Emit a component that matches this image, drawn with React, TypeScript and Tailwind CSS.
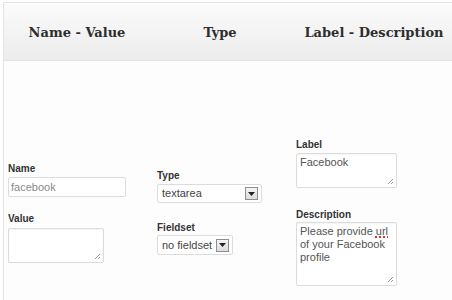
const serif = { fontFamily: '"DejaVu Serif", "Liberation Serif", serif' };

const Grip = () => (
  <svg className="absolute right-[2px] bottom-[2px]" width="8" height="8" viewBox="0 0 8 8">
    <path d="M7 2 L2 7 M7 5 L5 7" stroke="#9a9a9a" strokeWidth="1" />
  </svg>
);

const FakeTextarea = ({ className, children }: { className: string; children?: React.ReactNode }) => (
  <div
    className={`relative border border-[#dcdcdc] bg-white rounded-[2px] px-[3px] pt-[2px] text-[11px] leading-[13px] text-[#555] shadow-[inset_0_1px_1px_rgba(0,0,0,0.04)] ${className}`}
  >
    {children}
    <Grip />
  </div>
);

const FakeSelect = ({ value, className }: { value: string; className: string }) => (
  <div
    className={`flex items-center justify-between border border-[#dcdcdc] bg-white rounded-[2px] pl-[4px] pr-[3px] text-[11px] text-[#444] ${className}`}
  >
    <span>{value}</span>
    <span className="flex items-center justify-center w-[13px] h-[13px] border border-[#8f8f8f] bg-gradient-to-b from-[#f4f4f4] to-[#dcdcdc]">
      <svg width="7" height="4" viewBox="0 0 7 4">
        <path d="M0 0 H7 L3.5 4 Z" fill="#222" />
      </svg>
    </span>
  </div>
);

const Label = ({ children }: { children: React.ReactNode }) => (
  <div className="text-[10px] font-bold leading-[13px] text-[#333]">{children}</div>
);

export default function App() {
  return (
    <div
      className="w-[452px] h-[300px] overflow-hidden bg-white pt-[2px] pl-[3px]"
      style={{ fontFamily: '"Liberation Sans", Arial, sans-serif' }}
    >
      <div className="border-l border-t border-[#e4e4e4] bg-[#fdfdfd]">
        <div
          className="grid grid-cols-[146px_140px_1fr] h-[58px] pt-[3px] items-center border-b border-[#e4e4e4] bg-gradient-to-b from-[#fbfbfb] to-[#ececec] text-[13px] font-bold text-[#2e2e2e] whitespace-nowrap"
          style={serif}
        >
          <div className="text-center">Name - Value</div>
          <div className="text-center">Type</div>
          <div className="text-center pl-[6px]">Label - Description</div>
        </div>

        <div className="grid grid-cols-[146px_140px_1fr] h-[302px] items-center">
          <div className="flex flex-col pl-[4px]">
            <Label>Name</Label>
            <div className="mt-[2px] w-[118px] h-[20px] border border-[#dcdcdc] bg-white rounded-[2px] px-[2px] text-[11px] leading-[18px] text-[#8a8a8a]">
              facebook
            </div>
            <div className="mt-[15px]">
              <Label>Value</Label>
            </div>
            <FakeTextarea className="mt-[3px] w-[96px] h-[35px]" />
          </div>

          <div className="flex flex-col pl-[7px]">
            <Label>Type</Label>
            <FakeSelect value="textarea" className="mt-[2px] w-[105px] h-[19px]" />
            <div className="mt-[18px]">
              <Label>Fieldset</Label>
            </div>
            <FakeSelect value="no fieldset" className="mt-[1px] w-[76px] h-[20px]" />
          </div>

          <div className="flex flex-col pl-[6px]">
            <Label>Label</Label>
            <FakeTextarea className="mt-[2px] w-[101px] h-[35px]">Facebook</FakeTextarea>
            <div className="mt-[20px]">
              <Label>Description</Label>
            </div>
            <FakeTextarea className="mt-[1px] w-[101px] h-[64px]">
              Please provide{" "}
              <span className="underline decoration-dotted decoration-[#e03030] decoration-2 underline-offset-1">
                url
              </span>{" "}
              of your Facebook profile
            </FakeTextarea>
          </div>
        </div>
      </div>
    </div>
  );
}
